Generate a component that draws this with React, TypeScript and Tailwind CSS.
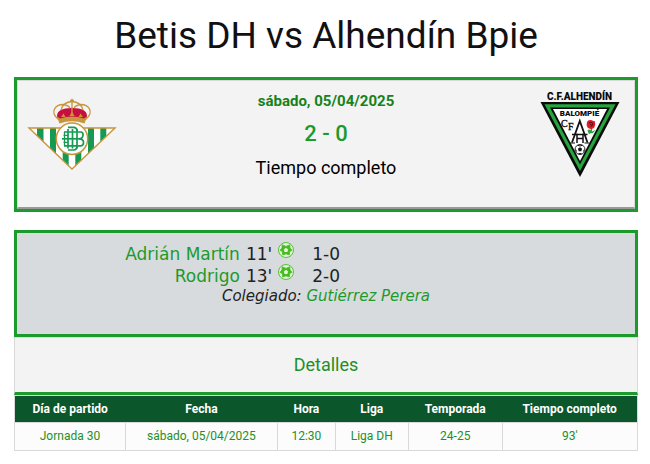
import React from 'react';

interface Goal {
  player: string;
  minute: string;
  score: string;
}

interface Detail {
  label: string;
  value: string;
  width: string;
  link: boolean;
}

const goals: Goal[] = [
  { player: 'Adrián Martín', minute: "11'", score: '1-0' },
  { player: 'Rodrigo', minute: "13'", score: '2-0' },
];

const details: Detail[] = [
  { label: 'Día de partido', value: 'Jornada 30', width: 'w-[17.8%]', link: true },
  { label: 'Fecha', value: 'sábado, 05/04/2025', width: 'w-[24.4%]', link: true },
  { label: 'Hora', value: '12:30', width: 'w-[9.3%]', link: false },
  { label: 'Liga', value: 'Liga DH', width: 'w-[11.7%]', link: true },
  { label: 'Temporada', value: '24-25', width: 'w-[15.1%]', link: true },
  { label: 'Tiempo completo', value: "93'", width: 'w-[21.7%]', link: false },
];

function BetisCrest() {
  return (
    <svg width="92" height="76" viewBox="0 0 92 76" role="img" aria-label="Betis DH">
      <defs>
        <clipPath id="betis-triangle">
          <path d="M3 32H89L46 73Z" />
        </clipPath>
      </defs>
      <path d="M3 32H89L46 73Z" fill="#fff" />
      <g clipPath="url(#betis-triangle)" fill="#169a53">
        <rect x="11" y="31" width="6.5" height="44" />
        <rect x="24" y="31" width="6" height="44" />
        <rect x="36.7" y="31" width="6" height="44" />
        <rect x="49.3" y="31" width="6" height="44" />
        <rect x="62" y="31" width="6" height="44" />
        <rect x="74.3" y="31" width="6" height="44" />
      </g>
      <path d="M3 32H89L46 73Z" fill="none" stroke="#c8943c" strokeWidth="1.4" />
      <circle cx="46" cy="42.8" r="15.7" fill="#fff" stroke="#c8943c" strokeWidth="1.5" />
      {/* Monogram */}
      <g fill="none" stroke="#169a53" strokeWidth="1.7">
        <path d="M42 33V52.5M46.5 33V52.5M51 33V52.5" />
        <path d="M38 36H55Q57.5 36.5 57 39.3Q56.5 42.8 53 42.8Q57.5 43 57.5 46.3Q57.5 49.8 55 49.8H38" />
        <path d="M36 42.8H54" />
        <path d="M42 31.4H47.5Q51 31.6 51 35M42 54H47.5Q51 53.8 51 50" />
        <path d="M37.5 39.4H42M37.5 46.4H42M38.5 36V49.8" strokeWidth="1.3" />
      </g>
      {/* Crown */}
      <path d="M31 20Q31 12 46 12Q61 12 61 20L60 24Q46 20 32 24Z" fill="#c70e3f" />
      <g fill="none" stroke="#c8943c" strokeWidth="1.3">
        <path d="M32 23Q26 18 28.5 13Q31 8.5 37 8.5Q42 9 44 12" />
        <path d="M60 23Q66 18 63.5 13Q61 8.5 55 8.5Q50 9 48 12" />
        <path d="M35 14Q37 6 46 5.5Q55 6 57 14" />
        <path d="M46 2.7V20M44 4.5H48" />
      </g>
      <path d="M35 21L37.5 17.5L39.5 21M43.5 20L46 15.5L48.5 20M52.5 21L54.5 17.5L57 21" fill="#c8943c" />
      <path d="M31 20.5L34 22.5Q46 18.5 58 22.5L61 20.5L58.5 27.5Q46 23 33.5 27.5Z" fill="#c8943c" />
    </svg>
  );
}

function AlhendinCrest() {
  return (
    <svg width="80" height="88" viewBox="0 0 80 88" role="img" aria-label="Alhendín Bpie">
      <text x="39.5" y="10" textAnchor="middle" className="font-[Roboto] text-[10px] font-black" fill="#090909">
        C.F.ALHENDÍN
      </text>
      <path d="M0.5 12H79.5L40 87Z" fill="#0a0a0a" />
      <path d="M4.5 14.2H75.5L40 81Z" fill="#26a43d" />
      <path d="M10 17.5H70L40 74.5Z" fill="#0a0a0a" />
      <path d="M13 19H67L40 71Z" fill="#fff" />
      <text x="39.5" y="26" textAnchor="middle" className="font-[Roboto] text-[8px] font-black" fill="#090909">
        BALOMPIÉ
      </text>
      <text x="21" y="37" className="font-['Liberation_Serif'] text-[10px]" fill="#090909" stroke="#090909" strokeWidth="0.3">C</text>
      <text x="28" y="40" className="font-['Liberation_Serif'] text-[10px]" fill="#090909" stroke="#090909" strokeWidth="0.3">F</text>
      {/* Interlaced letters */}
      <g fill="none" stroke="#111" strokeWidth="1.8">
        <path d="M32 52.5L39.8 31L47.5 52.5" />
        <path d="M32 44.5H47.5M37 43.5V53M43 43.5V53M37 48.5H43" strokeWidth="1.5" />
        <path d="M30 53H35M44.5 53H49.5" strokeWidth="1" />
      </g>
      {/* Rose */}
      <path d="M51.5 38Q52 41 49 43.5" fill="none" stroke="#18a137" strokeWidth="1.2" />
      <path d="M47.5 40Q50 38.5 52 41.5L55.5 40L53 43L48.5 43.5Z" fill="#26a43d" />
      <path d="M47 32Q48 29.5 51 30L55 31.5Q56 35 54 38Q50 40 47.5 37.5Q46 35 47 32Z" fill="#e11a2b" />
      <path d="M49 33Q51 31 53 33.5Q53 36 50.5 36.5M50 34L52 35.5" fill="none" stroke="#501016" />
      {/* Football */}
      <circle cx="40" cy="59.5" r="5" fill="#fff" stroke="#111" strokeWidth="0.9" />
      <path d="M40 57.3L42.1 58.8L41.3 61.3H38.7L37.9 58.8Z" fill="#111" />
      <path d="M37.8 55.3L40 56L42.2 55.3M35.6 59.4L36.6 61.6M44.4 59.4L43.4 61.6M38.5 63.6H41.5" stroke="#111" fill="none" />
    </svg>
  );
}

function GoalIcon() {
  return (
    <svg width="16" height="16" viewBox="0 0 16 16" role="img" aria-label="Gol">
      <circle cx="8" cy="8" r="7.5" fill="#e4f3df" stroke="#47bb20" strokeWidth="0.9" />
      {/* Ring of five panels round an open centre */}
      <path d="M4.2 2.8L8 4.4L11.8 2.8L12 6L14 8.3L11.6 9.6L11.3 13L8 11.8L4.7 13L4.4 9.6L2 8.3L4 6Z" fill="#47bb20" stroke="#47bb20" strokeWidth="0.8" strokeLinejoin="round" />
      <path d="M8 5.8L10.2 7.4L9.4 9.9H6.6L5.8 7.4Z" fill="#e4f3df" />
    </svg>
  );
}

export default function App() {
  return (
    <main className="bg-white pt-4 pr-3 pl-3.5 font-[Roboto,sans-serif] text-black">
      <h1 className="mb-[21px] text-center text-[37px] leading-10 text-[#111]">Betis DH vs Alhendín Bpie</h1>

      {/* Scoreboard */}
      <section className="mb-[18px] border-3 border-[#1c9a2b]">
        <div className="grid grid-cols-[1fr_auto_1fr] items-start border-t border-r border-b-2 border-l border-t-[#d9d9d9] border-r-[#d9d9d9] border-b-[#999] border-l-[#d9d9d9] bg-[#f3f3f3] px-2 pt-2 pb-[26px]">
          <div className="pt-[7px]">
            <BetisCrest />
          </div>
          <div className="text-center">
            <p className="text-[15px] leading-6 font-bold text-[#16821b]">sábado, 05/04/2025</p>
            <p className="text-[22px] leading-[42px] font-medium text-[#1c9a2b]">2 - 0</p>
            <p className="text-[18px] leading-[26px]">Tiempo completo</p>
          </div>
          <div className="flex justify-end pt-px pr-1.5">
            <AlhendinCrest />
          </div>
        </div>
      </section>

      {/* Goals and referee */}
      <section className="border-3 border-[#1c9a2b] bg-[#d7dbde] pt-[9px] pb-7 font-['DejaVu_Sans',sans-serif] text-[17px] leading-6 text-[#222]">
        <ul className="pr-0.5">
          {goals.map((goal) => (
            <li key={goal.player} className="grid h-[22px] grid-cols-[9fr_11fr]">
              <span className="flex items-start justify-end gap-1.5">
                <a href="#" className="text-[#1c9a2b]">{goal.player}</a>
                <span>{goal.minute}</span>
                <GoalIcon />
              </span>
              <span className="pl-[18px]">{goal.score}</span>
            </li>
          ))}
        </ul>
        <p className="text-center text-[15px] leading-5 italic">
          Colegiado: <a href="#" className="text-[#1c9a2b]">Gutiérrez Perera</a>
        </p>
      </section>

      {/* Details */}
      <section>
        <h2 className="border-x border-t border-b-3 border-x-[#d9d9d9] border-t-[#d9d9d9] border-b-[#1c9a2b] bg-[#f3f3f3] text-center text-[18px] leading-[54px] text-[#1f8f27]">
          Detalles
        </h2>
        <table className="w-full table-fixed border-collapse border border-[#d9d9d9] text-center text-[12px]">
          <thead className="bg-[#0b562b] text-white">
            <tr>
              {details.map((detail) => (
                <th key={detail.label} scope="col" className={`${detail.width} py-1 leading-[18px] font-bold`}>
                  {detail.label}
                </th>
              ))}
            </tr>
          </thead>
          <tbody className="bg-[#fcfcfc] text-[#1f8f27]">
            <tr>
              {details.map((detail) => (
                <td key={detail.label} className="border border-[#d9d9d9] pt-1 pb-[5px] leading-[18px]">
                  {detail.link ? <a href="#">{detail.value}</a> : detail.value}
                </td>
              ))}
            </tr>
          </tbody>
        </table>
      </section>
    </main>
  );
}
